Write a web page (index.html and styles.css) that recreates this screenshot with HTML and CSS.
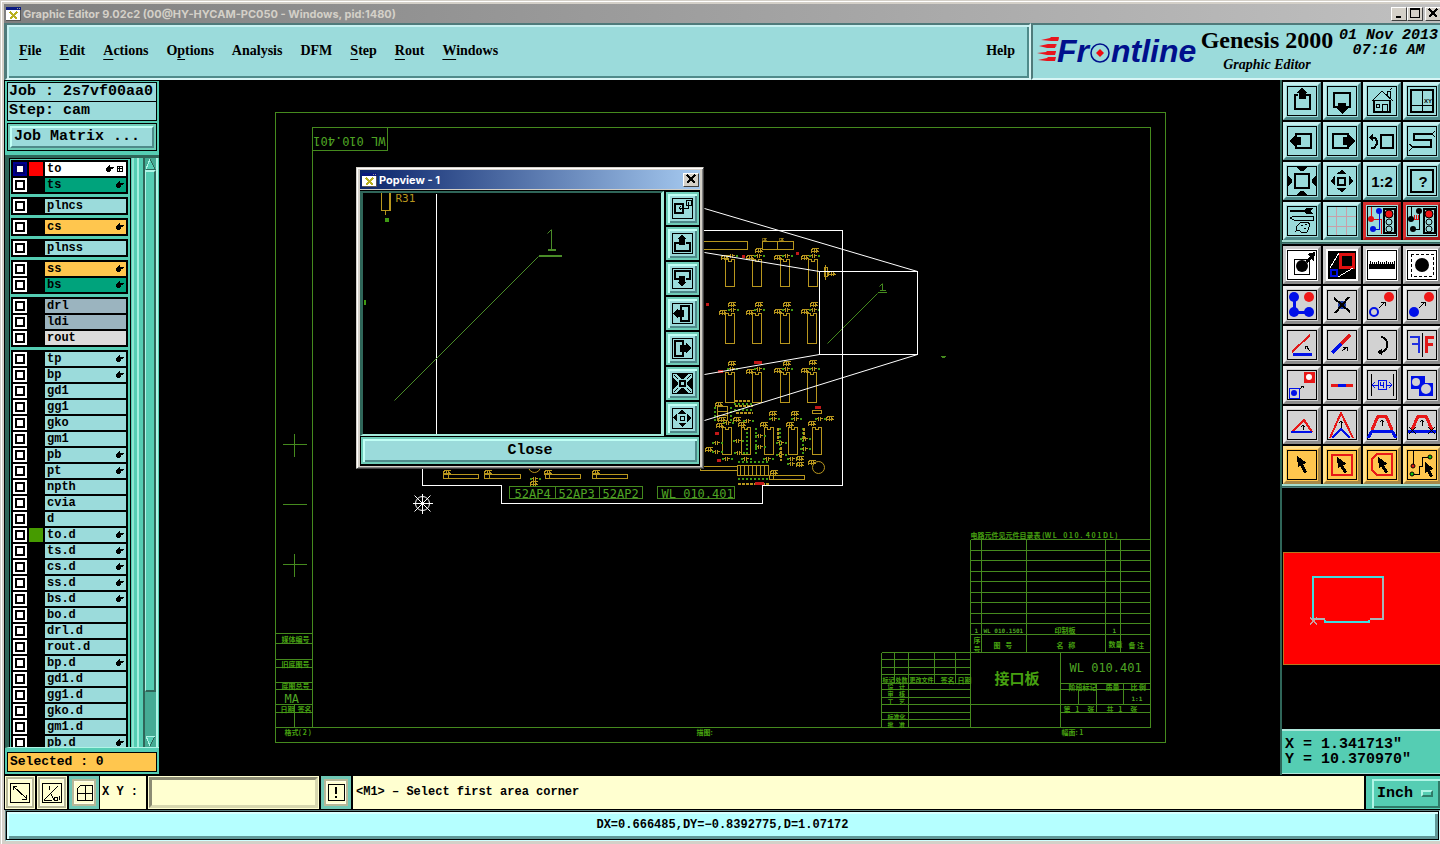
FILE: index.html
```html
<!DOCTYPE html>
<html lang="en">
<head>
<meta charset="utf-8">
<title>Graphic Editor 9.02c2</title>
<link rel="stylesheet" href="styles.css">
</head>
<body>
<svg class="defs" aria-hidden="true">
  <symbol id="app" viewBox="0 0 15 14"><path fill="#fff" d="M0 0h15v14H0z"/><path fill="#0a1a80" d="M0 0h15v3H0z"/><path fill="#999" d="M11 1h1v1h-1zM13 1h1v1h-1z"/><path stroke="#b8b020" stroke-width="2" fill="none" d="M4 5l7 7M11 5l-7 7"/><path stroke="#555" fill="none" d="M14.500 3v10.500H0"/></symbol>
  <symbol id="hand" viewBox="0 0 8 8"><path d="M3 0h1v2h4v1H7v1H5v2H4v1H1V6H0V3h1V2h1V1h1z"/></symbol>
  <symbol id="chip" viewBox="0 0 10 31" overflow="visible"><path d="M0 0h3v2h3V0h3v30H0z" fill="none" stroke="#b8961e"/></symbol>
  <symbol id="chips" viewBox="0 0 10 27" overflow="visible"><path d="M0 0h3v2h3V0h3v27H0z" fill="none" stroke="#b8961e"/></symbol>
  <symbol id="cap" viewBox="0 0 10 5" overflow="visible"><path d="M2 2h2M6 2h2" stroke="#b8961e"/><path d="M4 0v4M6 0v4" stroke="#b8961e"/><path d="M0 2h2M9 2h2" stroke="#3f9a14" stroke-width="2"/></symbol>
  <symbol id="lbl" viewBox="0 0 7 4" overflow="visible"><path d="M0 0h7M0 1h1M0 3h7M0 0v4M3 0v4M5 0v4M6 1v2" stroke="#b8961e" fill="none"/></symbol>
</svg>
<div class="window">
  <header class="titlebar">
    <svg class="app-icon"><use href="#app"/></svg>
    <h1>Graphic Editor 9.02c2 (00@HY-HYCAM-PC050 - Windows, pid:1480)</h1>
    <div class="controls">
      <button aria-label="Minimize"><svg viewBox="0 0 12 11"><path d="M3 8h5v2H3z"/></svg></button>
      <button aria-label="Maximize"><svg viewBox="0 0 12 11"><path d="M1 0h10v10H1zM2 2v7h8V2z" fill-rule="evenodd"/></svg></button>
      <button class="gap" aria-label="Close window"><svg viewBox="0 0 12 11"><path d="M2 1l8 8M10 1L2 9" stroke="#000" stroke-width="2"/></svg></button>
    </div>
  </header>
  <div class="header">
    <nav class="menubar">
      <button><u>F</u>ile</button><button><u>E</u>dit</button><button><u>A</u>ctions</button><button>O<u>p</u>tions</button><button>Analysis</button><button>DFM</button><button><u>S</u>tep</button><button><u>R</u>out</button><button><u>W</u>indows</button>
      <button class="help">Help</button>
    </nav>
    <div class="brand">
      <svg class="logo" viewBox="0 -8 160 46" role="img" aria-label="Frontline">
        <g fill="#e8141c"><path d="M4 4l9-2 1-1h8l-1 4h-7zM2 10l9-2h8l-1 4h-8zM0 17l9-1 1-1h9l-1 4h-8zM1 24l9-2 1-1h8l-1 4h-8z"/><path d="M15 2h7l-1 3h-7zM13 8h7l-1 3h-7zM12 15h7l-1 3h-7z" opacity=".6"/></g>
        <g class="logo-text"><text x="20" y="26">Fr</text><text x="74" y="26">ntline</text></g>
        <circle cx="63" cy="17" r="9" fill="#9bdbdb" stroke="#00108c" stroke-width="1.500"/><path d="M63 13l4 4-4 4-4-4z" fill="#f00c10"/>
      </svg>
      <div class="product"><strong>Genesis 2000</strong><em>Graphic Editor</em></div>
      <time class="clock">01 Nov 2013<br>07:16 AM</time>
    </div>
  </div>

  <main class="main">
    <aside class="sidebar">
      <div class="job">Job : 2s7vf00aa0</div>
      <div class="job">Step: cam</div>
      <div class="matrix"><button>Job Matrix ...</button></div>
      <div class="layers">
        <div class="list">
          <div class="group">
            <label class="layer white"><input type="checkbox" checked><i class="red"></i><span>to<svg><use href="#hand"/></svg><svg viewBox="0 0 7 7"><path d="M1 1h5v5H1zM3 1v5M1 3h5" fill="none" stroke="#000"/></svg></span></label>
            <label class="layer green"><input type="checkbox"><i></i><span>ts<svg><use href="#hand"/></svg></span></label>
          </div>
          <div class="group"><label class="layer"><input type="checkbox"><i></i><span>plncs</span></label></div>
          <div class="group"><label class="layer orange"><input type="checkbox"><i></i><span>cs<svg><use href="#hand"/></svg></span></label></div>
          <div class="group"><label class="layer"><input type="checkbox"><i></i><span>plnss</span></label></div>
          <div class="group">
            <label class="layer orange"><input type="checkbox"><i></i><span>ss<svg><use href="#hand"/></svg></span></label>
            <label class="layer green"><input type="checkbox"><i></i><span>bs<svg><use href="#hand"/></svg></span></label>
          </div>
          <div class="group">
            <label class="layer slate"><input type="checkbox"><i></i><span>drl</span></label>
            <label class="layer slate"><input type="checkbox"><i></i><span>ldi</span></label>
            <label class="layer silver"><input type="checkbox"><i></i><span>rout</span></label>
          </div>
          <div class="group">
            <label class="layer"><input type="checkbox"><i></i><span>tp<svg><use href="#hand"/></svg></span></label>
            <label class="layer"><input type="checkbox"><i></i><span>bp<svg><use href="#hand"/></svg></span></label>
            <label class="layer"><input type="checkbox"><i></i><span>gd1</span></label>
            <label class="layer"><input type="checkbox"><i></i><span>gg1</span></label>
            <label class="layer"><input type="checkbox"><i></i><span>gko</span></label>
            <label class="layer"><input type="checkbox"><i></i><span>gm1</span></label>
            <label class="layer"><input type="checkbox"><i></i><span>pb<svg><use href="#hand"/></svg></span></label>
            <label class="layer"><input type="checkbox"><i></i><span>pt<svg><use href="#hand"/></svg></span></label>
            <label class="layer"><input type="checkbox"><i></i><span>npth</span></label>
            <label class="layer"><input type="checkbox"><i></i><span>cvia</span></label>
            <label class="layer"><input type="checkbox"><i></i><span>d</span></label>
            <label class="layer"><input type="checkbox"><i class="olive"></i><span>to.d<svg><use href="#hand"/></svg></span></label>
            <label class="layer"><input type="checkbox"><i></i><span>ts.d<svg><use href="#hand"/></svg></span></label>
            <label class="layer"><input type="checkbox"><i></i><span>cs.d<svg><use href="#hand"/></svg></span></label>
            <label class="layer"><input type="checkbox"><i></i><span>ss.d<svg><use href="#hand"/></svg></span></label>
            <label class="layer"><input type="checkbox"><i></i><span>bs.d<svg><use href="#hand"/></svg></span></label>
            <label class="layer"><input type="checkbox"><i></i><span>bo.d</span></label>
            <label class="layer"><input type="checkbox"><i></i><span>drl.d</span></label>
            <label class="layer"><input type="checkbox"><i></i><span>rout.d</span></label>
            <label class="layer"><input type="checkbox"><i></i><span>bp.d<svg><use href="#hand"/></svg></span></label>
            <label class="layer"><input type="checkbox"><i></i><span>gd1.d</span></label>
            <label class="layer"><input type="checkbox"><i></i><span>gg1.d</span></label>
            <label class="layer"><input type="checkbox"><i></i><span>gko.d</span></label>
            <label class="layer"><input type="checkbox"><i></i><span>gm1.d</span></label>
            <label class="layer"><input type="checkbox"><i></i><span>pb.d<svg><use href="#hand"/></svg></span></label>
          </div>
        </div>
        <div class="rail"></div>
        <div class="scrollbar">
          <svg viewBox="0 0 11 12"><path d="M5 1l5 10H1z" fill="#55cdb3"/><path d="M5 1L1 11" stroke="#b0f5e6"/><path d="M5 1l5 10H1" stroke="#2f6659" fill="none"/></svg>
          <div class="thumb"></div><div class="trough"></div>
          <svg viewBox="0 0 11 12"><path d="M1 1h9L5 11z" fill="#55cdb3"/><path d="M10 1L5 11" stroke="#2f6659"/><path d="M10 1H1l4 10" stroke="#b0f5e6" fill="none"/></svg>
        </div>
      </div>
      <div class="selected">Selected : 0</div>
    </aside>

    <section class="viewer">
      <svg class="drawing" viewBox="158.500 79.500 1121 695">
        <g class="sheet">
          <path d="M275 112H1165V742H275zM312 127H1150V727H312zM312 150H387V127"/>
          <path d="M282 444H306M294 433V456M282 504H306M282 564H306M294 553V576"/>
          <path d="M275 633H312M275 643H312M275 659H312M275 667H312M275 682H312M275 689H312M275 704H312M275 712H312M275 727H312M294 704V727"/>
          <path d="M970 539H1150M970 550H1150M970 560H1150M970 571H1150M970 581H1150M970 592H1150M970 602H1150M970 613H1150M970 623H1150M970 634H1150M881 652H1150"/>
          <path d="M970 539V727M981 539V652M1026 539V652M1105 539V652M1120 539V652"/>
          <path d="M881 652V727M894 652V683M908 652V727M934 652V683M955 652V683M881 659H970M881 667H970M881 674H970M881 683H970M881 689H970M881 697H970M881 704H1150M881 712H970M881 719H970"/>
          <path d="M1060 652V727M1060 683H1150M1060 689H1150M1060 712H1150M1078 689V704M1096 683V712M1123 683V704"/>
          <path d="M509 486H642V498H509zM555 486V498M599 486V498M657 486H734V498H657z"/>
          <path class="smooth" d="M827 343L877 293M879 286l3-3"/><path d="M877 292H886M882 283V290M879 290H885M940 356H945M941 357H944"/>
        </g>
        <g class="cad">
          <text transform="rotate(180 350 140)" x="315" y="144">WL 010.401</text>
          <text x="1069" y="671">WL 010.401</text>
          <text x="661" y="497">WL 010.401</text>
          <text x="514" y="497">52AP4</text><text x="558" y="497">52AP3</text><text x="602" y="497">52AP2</text>
          <text x="284" y="702">MA</text>
        </g>
        <g class="cad tiny">
          <text x="974" y="632">1</text><text x="983" y="632">WL 010.1501</text><text x="1112" y="632">1</text><text x="1131" y="700">1:1</text>
        </g>
        <g class="cjk">
          <text x="970" y="537">电路元件见元件目录表 (W L &#160; &#160;0 1 0 . &#160;4 0 1 D L )</text>
          <text x="1054" y="632">印制板</text>
          <text x="973" y="642">序</text><text x="973" y="651">号</text>
          <text x="993" y="647">图 &#160; 号</text><text x="1056" y="647">名 &#160; 称</text><text x="1108" y="646">数量</text><text x="1128" y="647">备 注</text>
          <text x="940" y="682">签名</text><text x="957" y="682">日期</text>
          <text x="1068" y="689">阶段标记</text><text x="1105" y="689">质量</text><text x="1130" y="689">比 例</text>
          <text x="1063" y="711">第 &#160; 1 &#160; &#160; 张</text><text x="1106" y="711">共 &#160; 1 &#160; &#160; 张</text>
          <text x="1061" y="734">幅面: 1</text><text x="696" y="734">描图:</text><text x="284" y="734">格式( 2 )</text>
          <text x="281" y="641">媒体编号</text><text x="281" y="666">旧底图号</text><text x="281" y="688">底图总号</text><text x="280" y="711">日期</text><text x="297" y="711">签名</text>
        </g>
        <g class="cjk small">
          <text x="882" y="681">标记</text><text x="895" y="681">处数</text><text x="909" y="681">更改文件</text>
          <text x="887" y="688">设 &#160; &#160;计</text><text x="887" y="695">审 &#160; &#160;核</text><text x="887" y="703">工 &#160; &#160;艺</text><text x="887" y="718">标准化</text><text x="887" y="726">批 &#160; &#160;准</text>
        </g>
        <text class="board-name" x="994" y="683">接口板</text>
        <g class="parts">
          <path d="M700 241H747V249H700zM762 241H793V249H762zM777 241V249M700 466H737V470H700zM769 475H804V479H769zM443 474H478V478H443zM484 474H520V478H484zM545 474H580V478H545zM592 474H627V478H592z"/>
          <path d="M448 474V478M489 474V478M549 474V478M596 474V478M773 475V479M737 465H768V475H737zM740 465V475M744 465V475M748 465V475M752 465V475M756 465V475M760 465V475M764 465V475M812 410H821V413H812zM824 267H827V276H824zM825 264V279M717 406H727V420H717zM717 411H727M717 415H727"/>
          <circle cx="818" cy="467" r="6"/><circle cx="534" cy="466" r="6"/>
          <path class="pads" stroke="#3f9a14" stroke-width="2" stroke-dasharray="2 2" d="M737 461H768M737 478H768M733 409H752M733 403H752M714 406V420M730 406V420M746 427V455M755 427V455M779 427V455M802 427V455"/>
          <path stroke-width="2" stroke-dasharray="3 1" d="M737 483H768M734 400H750M734 405H752M735 412H752M777 427V440M780 446V460M803 427V438"/>
          <path stroke="#c21818" stroke-width="3" d="M754 483H763M705 304H708M753 362H761M717 371H722M714 433H718M795 253H798M741 256H744M814 407H820M716 460H720"/>
        </g>
        <g class="parts">
          <use href="#chips" x="725" y="259" width="10" height="27"/><use href="#chips" x="752" y="259" width="10" height="27"/><use href="#chips" x="780" y="259" width="10" height="27"/><use href="#chips" x="808" y="259" width="10" height="27"/>
          <use href="#chip" x="725" y="313" width="10" height="31"/><use href="#chip" x="752" y="313" width="10" height="31"/><use href="#chip" x="780" y="313" width="10" height="31"/><use href="#chip" x="807" y="313" width="10" height="31"/>
          <use href="#chip" x="725" y="372" width="10" height="31"/><use href="#chip" x="752" y="372" width="10" height="31"/><use href="#chip" x="780" y="372" width="10" height="31"/><use href="#chip" x="807" y="372" width="10" height="31"/>
          <use href="#chips" x="722" y="427" width="10" height="27"/><use href="#chips" x="741" y="427" width="10" height="27"/><use href="#chips" x="764" y="427" width="10" height="27"/><use href="#chips" x="788" y="427" width="10" height="27"/><use href="#chips" x="812" y="427" width="10" height="27"/>
          <use href="#cap" x="726" y="253" width="10" height="5"/><use href="#cap" x="753" y="253" width="10" height="5"/><use href="#cap" x="781" y="253" width="10" height="5"/><use href="#cap" x="808" y="253" width="10" height="5"/>
          <use href="#cap" x="727" y="307" width="10" height="5"/><use href="#cap" x="753" y="307" width="10" height="5"/><use href="#cap" x="781" y="307" width="10" height="5"/><use href="#cap" x="808" y="307" width="10" height="5"/>
          <use href="#cap" x="726" y="366" width="10" height="5"/><use href="#cap" x="753" y="366" width="10" height="5"/><use href="#cap" x="781" y="366" width="10" height="5"/><use href="#cap" x="808" y="366" width="10" height="5"/>
          <use href="#cap" x="768" y="416" width="10" height="5"/><use href="#cap" x="790" y="416" width="10" height="5"/><use href="#cap" x="814" y="416" width="10" height="5"/><use href="#cap" x="742" y="418" width="10" height="5"/><use href="#cap" x="722" y="420" width="10" height="5"/>
          <use href="#cap" x="711" y="440" width="10" height="5"/><use href="#cap" x="711" y="449" width="10" height="5"/><use href="#cap" x="732" y="438" width="10" height="5"/><use href="#cap" x="733" y="450" width="10" height="5"/><use href="#cap" x="754" y="433" width="10" height="5"/><use href="#cap" x="754" y="444" width="10" height="5"/><use href="#cap" x="775" y="440" width="10" height="5"/><use href="#cap" x="775" y="452" width="10" height="5"/><use href="#cap" x="799" y="436" width="10" height="5"/><use href="#cap" x="799" y="446" width="10" height="5"/><use href="#cap" x="721" y="456" width="10" height="5"/><use href="#cap" x="740" y="456" width="10" height="5"/><use href="#cap" x="762" y="456" width="10" height="5"/><use href="#cap" x="786" y="456" width="10" height="5"/><use href="#cap" x="786" y="461" width="10" height="5"/>
          <use href="#lbl" x="762" y="237" width="4" height="4"/><use href="#lbl" x="779" y="237" width="4" height="4"/>
          <use href="#lbl" x="721" y="255" width="7" height="4"/><use href="#lbl" x="746" y="255" width="7" height="4"/><use href="#lbl" x="774" y="255" width="7" height="4"/><use href="#lbl" x="801" y="255" width="7" height="4"/><use href="#lbl" x="755" y="248" width="7" height="4"/><use href="#lbl" x="811" y="248" width="7" height="4"/><use href="#lbl" x="828" y="271" width="7" height="4"/>
          <use href="#lbl" x="719" y="310" width="7" height="4"/><use href="#lbl" x="746" y="310" width="7" height="4"/><use href="#lbl" x="774" y="309" width="7" height="4"/><use href="#lbl" x="801" y="309" width="7" height="4"/><use href="#lbl" x="728" y="302" width="7" height="4"/><use href="#lbl" x="755" y="302" width="7" height="4"/><use href="#lbl" x="783" y="302" width="7" height="4"/><use href="#lbl" x="810" y="302" width="7" height="4"/>
          <use href="#lbl" x="746" y="369" width="7" height="4"/><use href="#lbl" x="774" y="368" width="7" height="4"/><use href="#lbl" x="801" y="368" width="7" height="4"/><use href="#lbl" x="728" y="361" width="7" height="4"/><use href="#lbl" x="783" y="361" width="7" height="4"/><use href="#lbl" x="809" y="360" width="7" height="4"/>
          <use href="#lbl" x="715" y="402" width="7" height="4"/><use href="#lbl" x="769" y="411" width="7" height="4"/><use href="#lbl" x="791" y="411" width="7" height="4"/><use href="#lbl" x="826" y="416" width="7" height="4"/><use href="#lbl" x="733" y="417" width="7" height="4"/><use href="#lbl" x="718" y="417" width="7" height="4"/>
          <use href="#lbl" x="716" y="423" width="7" height="4"/><use href="#lbl" x="738" y="422" width="7" height="4"/><use href="#lbl" x="760" y="422" width="7" height="4"/><use href="#lbl" x="786" y="422" width="7" height="4"/><use href="#lbl" x="808" y="421" width="7" height="4"/><use href="#lbl" x="796" y="456" width="7" height="4"/><use href="#lbl" x="796" y="462" width="7" height="4"/><use href="#lbl" x="808" y="460" width="7" height="4"/><use href="#lbl" x="770" y="470" width="7" height="4"/><use href="#lbl" x="705" y="447" width="7" height="4"/>
          <use href="#lbl" x="443" y="470" width="7" height="4"/><use href="#lbl" x="484" y="470" width="7" height="4"/><use href="#lbl" x="544" y="470" width="7" height="4"/><use href="#lbl" x="592" y="470" width="7" height="4"/><use href="#lbl" x="530" y="481" width="7" height="4"/><use href="#cap" x="529" y="476" width="10" height="5"/>
        </g>
        <g class="outline">
          <path d="M422 460V485H501V503H762V485H842V230H700M819 271H917V354H819z"/>
          <path class="smooth" d="M704 208L917 271M704 252L819 271M704 374L819 354M704 420L917 354"/>
          <path d="M412 503H432M422 493V513"/><path class="smooth" d="M414 495l16 16M430 495l-16 16"/><circle class="smooth" cx="422" cy="503" r="7"/>
        </g>
      </svg>

      <div class="popview" role="dialog" aria-label="Popview - 1">
        <div class="pop-title"><svg class="app-icon"><use href="#app"/></svg><h2>Popview - 1</h2><button aria-label="Close popview"><svg viewBox="0 0 12 11"><path d="M2 1l8 8M10 1L2 9" stroke="#000" stroke-width="2"/></svg></button></div>
        <div class="pop-body">
          <div class="pop-view">
            <svg viewBox="362.500 192.500 298 241">
              <path d="M436 193V433" stroke="#fff"/>
              <g stroke="#b8961e" fill="none"><path d="M381 190V210H390V190M389 190V210M385 210V214"/></g>
              <text x="395" y="201">R31</text>
              <path d="M384 217h4v4h-4zM363 299h2v5h-2z" fill="#3f9a14"/>
              <g stroke="#4a8c28" fill="none"><path d="M551 229V250M547 250H555M538 256H561" stroke-width="1"/><path d="M547 249H555M538 255H561"/><path class="smooth" d="M394 400L538 256M547 233l4-4"/></g>
            </svg>
          </div>
          <div class="pop-tools">
            <button aria-label="Pan view"><svg viewBox="0 0 21 21"><path class="f" d="M0 0h20v20H0z"/><path class="s" stroke-width="2" d="M3 6h8v9H3z"/><path class="s" d="M14 2h5v5h-5zM16 4v6h-9M9 8l-2 2 2 2"/></svg></button>
            <button aria-label="Pan up"><svg viewBox="0 0 21 21"><path class="f" d="M0 0h20v20H0z"/><path class="s" stroke-width="2" d="M7 10H3v8h15v-8h-4"/><path d="M10 2l5 4h-2v6H7V6H5z"/></svg></button>
            <button aria-label="Pan down"><svg viewBox="0 0 21 21"><path class="f" d="M0 0h20v20H0z"/><path class="s" stroke-width="2" d="M7 11H3V3h15v8h-4"/><path d="M10 18l5-4h-2V8H7v6H5z"/></svg></button>
            <button aria-label="Pan left"><svg viewBox="0 0 21 21"><path class="f" d="M0 0h20v20H0z"/><path class="s" stroke-width="2" d="M9 7V3h8v15H9v-4"/><path d="M1 10l5-5v2h6v7H6v2z"/></svg></button>
            <button aria-label="Pan right"><svg viewBox="0 0 21 21"><path class="f" d="M0 0h20v20H0z"/><path class="s" stroke-width="2" d="M11 7V3H3v15h8v-4"/><path d="M19 10l-5-5v2H8v7h6v2z"/></svg></button>
            <button aria-label="Zoom in"><svg viewBox="0 0 21 21"><path class="f" d="M0 0h20v20H0z"/><path class="s" stroke-width="2" d="M8 8h5v5H8z"/><path class="s" d="M2 2l4 4M19 2l-4 4M2 19l4-4M19 19l-4-4"/><path d="M5 1h11l-4 5H9zM5 20h11l-4-5H9zM1 5v11l5-4V9zM20 5v11l-5-4V9z"/></svg></button>
            <button aria-label="Zoom out"><svg viewBox="0 0 21 21"><path class="f" d="M0 0h20v20H0z"/><path class="s" d="M8 8h4v4H8z"/><path d="M10 1l4 5H6zM10 19l4-4H6zM1 10l4-5v9zM19 10l-4-5v9z"/></svg></button>
          </div>
        </div>
        <div class="pop-close"><button>Close</button></div>
      </div>
    </section>

    <aside class="tools">
      <div class="grid">
        <button aria-label="Pan up"><svg viewBox="0 0 30 30"><path class="f" d="M0 0h29v29H0z"/><path class="s" stroke-width="2" d="M11 9H8v14h15V9h-4"/><path d="M15 2l6 5h-2v6h-7V7H9z"/></svg></button>
        <button aria-label="Pan down"><svg viewBox="0 0 30 30"><path class="f" d="M0 0h29v29H0z"/><path class="s" stroke-width="2" d="M11 21H7V7h16v14h-4"/><path d="M15 28l6-6h-2v-5h-8v5H9z"/></svg></button>
        <button aria-label="Home"><svg viewBox="0 0 30 30"><path class="f" d="M0 0h29v29H0z"/><path class="s" stroke-width="2" d="M7 14v12h16V14"/><path class="s" d="M5 15L15 5l11 10M7 14h16M20 9V5h3v7M23 4l2-2M9 18h3v3H9zM15 26v-8h5v8"/></svg></button>
        <button aria-label="Coordinates"><svg viewBox="0 0 30 30"><path class="f" d="M0 0h29v29H0z"/><path class="s" stroke-width="2" d="M4 4h22v22H4z"/><path class="s" d="M15 4v22M4 19h22"/><text class="xy" x="17" y="17">XY</text></svg></button>
        <button aria-label="Pan left"><svg viewBox="0 0 30 30"><path class="f" d="M0 0h29v29H0z"/><path class="s" stroke-width="2" d="M9 11V8h15v14H9v-3"/><path d="M2 15l6-6v2h6v8H8v2z"/></svg></button>
        <button aria-label="Pan right"><svg viewBox="0 0 30 30"><path class="f" d="M0 0h29v29H0z"/><path class="s" stroke-width="2" d="M21 11V8H6v14h15v-3"/><path d="M28 15l-6-6v2h-6v8h6v2z"/></svg></button>
        <button aria-label="Previous view"><svg viewBox="0 0 30 30"><path class="f" d="M0 0h29v29H0z"/><path class="s" stroke-width="2" d="M14 9h12v13H14zM5 12h3l2 3v3l-3 4H4"/><path d="M2 12l4-5v9z"/></svg></button>
        <button aria-label="Serpentine"><svg viewBox="0 0 30 30"><path class="f" d="M0 0h29v29H0z"/><path class="s" stroke-width="2" d="M25 8H7v6h17v7H6"/><path class="s" d="M25 8l3-3M25 8l3 3M6 21l-4-3M6 21l-4 4"/></svg></button>
        <button aria-label="Fit"><svg viewBox="0 0 30 30"><path class="f" d="M0 0h29v29H0z"/><path class="s" stroke-width="2" d="M8 8h14v14H8z"/><path d="M9 1h12l-5 4h-2zM9 29h12l-5-4h-2zM1 9v12l4-5v-2zM29 9v12l-4-5v-2z"/></svg></button>
        <button aria-label="Zoom out"><svg viewBox="0 0 30 30"><path class="f" d="M0 0h29v29H0z"/><path class="s" stroke-width="2" d="M11 12h7v7h-7z"/><path d="M15 4l5 4H9zM15 26l5-4H9zM4 15l4-6v11zM26 15l-4-6v11z"/></svg></button>
        <button aria-label="Scale one to two"><svg viewBox="0 0 30 30"><path class="f" d="M0 0h29v29H0z"/><text class="ratio" x="15" y="21">1:2</text></svg></button>
        <button aria-label="Query"><svg viewBox="0 0 30 30"><path class="f" d="M0 0h29v29H0z"/><path class="s" stroke-width="2" d="M4 4h22v22H4z"/><text class="ratio" x="16" y="21">?</text></svg></button>
        <button aria-label="Settings"><svg viewBox="0 0 30 30"><path class="f" d="M0 0h29v29H0z"/><path d="M3 4h14l3-2h6l-3 3 3 3h-6l-3-2H3z"/><path class="s" d="M3 12l4-2h19v4H7zM10 20l4-4h7l2 3-3 7h-6l-2-2-3 1z"/><path d="M14 19h2v1h-2zM18 18h2v1h-2zM17 22h2v1h-2z"/></svg></button>
        <button aria-label="Grid"><svg viewBox="0 0 30 30"><path class="f" d="M0 0h29v29H0z"/><path d="M9 1v28M19 1v28M1 10h28M1 20h28" stroke="#c9a0a8"/></svg></button>
        <button class="hot" aria-label="Online check"><svg viewBox="0 0 30 30"><path class="f" d="M0 0h29v29H0z"/><path d="M4 1v12h10v15" stroke="#e01010" fill="none"/><path d="M12 5v18H6" stroke="#0010e0" fill="none"/><circle cx="4" cy="13" r="3" fill="#e01010"/><circle cx="12" cy="5" r="3" fill="#0010e0"/><circle cx="6" cy="23" r="3" fill="#0010e0"/><path class="s" stroke-width="2" d="M17 3h11v24H17z"/><circle cx="22" cy="8" r="4" fill="#f01010" stroke="#000"/><circle class="s" cx="22" cy="16" r="3"/><circle class="s" cx="22" cy="23" r="3"/></svg></button>
        <button class="hot" aria-label="Spacing check"><svg viewBox="0 0 30 30"><path class="f" d="M0 0h29v29H0z"/><path class="s" d="M4 1v12M12 5v18H6"/><path d="M5 13h7M7 9v4M9 9v4M11 9v4" stroke="#e01010" fill="none"/><circle cx="4" cy="13" r="3"/><circle cx="12" cy="5" r="3"/><circle cx="6" cy="23" r="3"/><path class="s" stroke-width="2" d="M17 3h11v24H17z"/><circle cx="22" cy="8" r="4" fill="#f01010" stroke="#000"/><circle class="s" cx="22" cy="16" r="3"/><circle class="s" cx="22" cy="23" r="3"/></svg></button>
      </div>
      <div class="divider"></div>
      <div class="grid gray">
        <button class="paper" aria-label="Select feature"><svg viewBox="0 0 30 30"><path class="f" d="M0 0h29v29H0z"/><path class="s" d="M7 9h15v15H7z"/><circle cx="15" cy="16" r="6"/><path d="M18 11l5-5-3-2 8-2-1 9-3-2-4 4z"/></svg></button>
        <button class="paper" aria-label="Popview"><svg viewBox="0 0 30 30"><path d="M1 1h28v28H1z"/><path d="M13 4h13v13H13z" stroke="#e01010" stroke-width="3"/><path d="M4 20h6v6H4z" stroke="#0010e0" stroke-width="2"/><path d="M3 18L12 3M11 27l15-9" stroke="#fff"/></svg></button>
        <button class="paper" aria-label="Measure"><svg viewBox="0 0 30 30"><path class="f" d="M0 0h29v29H0z"/><path d="M2 14h26v5H2z"/><path d="M3 11v4M5 12v2M7 12v2M9 12v2M11 11v4M13 12v2M15 12v2M17 12v2M19 11v4M21 12v2M23 12v2M25 12v2M27 11v4" stroke="#000"/></svg></button>
        <button class="paper" aria-label="Highlight"><svg viewBox="0 0 30 30"><path class="f" d="M0 0h29v29H0z"/><path class="s" stroke-dasharray="3 2" d="M4 4h22v22H4z"/><circle cx="15" cy="15" r="7"/></svg></button>

        <button aria-label="Line chain"><svg viewBox="0 0 30 30"><path class="f" d="M0 0h29v29H0z"/><path d="M7 7v15h15" stroke="#0010e8" stroke-width="3" fill="none"/><g fill="#0010e8"><circle cx="7" cy="7" r="5"/><circle cx="7" cy="22" r="5"/><circle cx="22" cy="22" r="5"/></g><circle cx="22" cy="7" r="5" fill="#f01818"/></svg></button>
        <button aria-label="Delete"><svg viewBox="0 0 30 30"><path class="f" d="M0 0h29v29H0z"/><circle cx="15" cy="15" r="4" fill="#1030a0"/><path class="s" stroke-width="2" d="M7 8l16 14M22 7L8 23"/></svg></button>
        <button aria-label="Move"><svg viewBox="0 0 30 30"><path class="f" d="M0 0h29v29H0z"/><circle cx="22" cy="7" r="5" fill="#f01818"/><circle cx="7" cy="22" r="4" fill="none" stroke="#0010e8" stroke-width="2"/><path class="s" d="M12 18l5-5M14 12h4v4"/></svg></button>
        <button aria-label="Copy"><svg viewBox="0 0 30 30"><path class="f" d="M0 0h29v29H0z"/><circle cx="22" cy="7" r="5" fill="#f01818"/><circle cx="7" cy="22" r="5" fill="#0010e8"/><path class="s" d="M12 18l5-5M14 12h4v4"/></svg></button>

        <button aria-label="Rotate line"><svg viewBox="0 0 30 30"><path class="f" d="M0 0h29v29H0z"/><path d="M6 24h19" stroke="#0010e8" stroke-width="3"/><path d="M5 22L23 5" stroke="#e01818" stroke-width="2"/><path class="s" d="M19 16l4 5M18 19v-3h3"/></svg></button>
        <button aria-label="Extend line"><svg viewBox="0 0 30 30"><path class="f" d="M0 0h29v29H0z"/><path d="M5 23l9-9" stroke="#0010e8" stroke-width="3"/><path d="M14 14l9-9" stroke="#e01818" stroke-width="3"/><path class="s" d="M15 21l5-4M16 17h4v4"/></svg></button>
        <button aria-label="Rotate"><svg viewBox="0 0 30 30"><path class="f" d="M0 0h29v29H0z"/><path class="s" stroke-width="2" d="M14 7c7 1 9 12 1 15h-4"/><path d="M10 22l5-3v6z"/></svg></button>
        <button aria-label="Mirror"><svg viewBox="0 0 30 30"><path class="f" d="M0 0h29v29H0z"/><path class="s" d="M15 3v24"/><path d="M12 23V7H3M12 14H5" stroke="#2030e0" stroke-width="2" fill="none"/><path d="M19 23V7h8M19 14h7" stroke="#e01818" stroke-width="3" fill="none"/></svg></button>

        <button aria-label="Change symbol"><svg viewBox="0 0 30 30"><path class="f" d="M0 0h29v29H0z"/><path d="M17 2h11v11H17z" fill="#e81818"/><circle cx="22" cy="7" r="3" fill="#fff"/><path d="M2 18h10v10H2z" fill="none" stroke="#0010e8"/><circle cx="7" cy="23" r="3" fill="#0010e8"/><path class="s" d="M13 19l3-3M14 16h2v2"/></svg></button>
        <button aria-label="Break line"><svg viewBox="0 0 30 30"><path class="f" d="M0 0h29v29H0z"/><path d="M4 15h22" stroke="#e81818" stroke-width="3"/><path d="M11 15h8" stroke="#0010e8" stroke-width="3"/></svg></button>
        <button aria-label="Spacing"><svg viewBox="0 0 30 30"><path class="f" d="M0 0h29v29H0z"/><path class="s" d="M4 4v22M26 4v22"/><path d="M11 10h8v9h-8zM6 15h5M19 15h6M8 12l-3 3 3 3M22 12l3 3-3 3M13 12v3h4M16 12v6" stroke="#0010e8" fill="none"/></svg></button>
        <button aria-label="Merge surfaces"><svg viewBox="0 0 30 30"><path class="f" d="M0 0h29v29H0z"/><path d="M4 6h14v7h8v13H12v-7H4z" fill="#0010e8"/><circle cx="9" cy="12" r="4" fill="#d2d2d2"/><circle cx="19" cy="19" r="5" fill="#d2d2d2"/></svg></button>

        <button aria-label="Slope"><svg viewBox="0 0 30 30"><path class="f" d="M0 0h29v29H0z"/><path d="M5 22L17 10l8 12" stroke="#e81818" stroke-width="2" fill="none"/><path d="M4 22h21" stroke="#0010e8" stroke-width="2"/><path class="s" d="M16 20v-5M14 17l2-2 2 2"/></svg></button>
        <button aria-label="Peak"><svg viewBox="0 0 30 30"><path class="f" d="M0 0h29v29H0z"/><path d="M3 28L14 3l12 25" stroke="#e81818" stroke-width="2" fill="none"/><path d="M5 28l9-9 9 9" stroke="#0010e8" stroke-width="2" fill="none"/><path class="s" d="M14 18v-7M12 13l2-2 2 2"/></svg></button>
        <button aria-label="Plateau"><svg viewBox="0 0 30 30"><path class="f" d="M0 0h29v29H0z"/><path d="M5 20L11 6h8l6 14" stroke="#e81818" stroke-width="3" fill="none"/><path d="M1 28l4-7h20l4 7" stroke="#0010e8" stroke-width="3" fill="none"/><path class="s" d="M15 16v-6M13 12l2-2 2 2"/></svg></button>
        <button aria-label="Cut plateau"><svg viewBox="0 0 30 30"><path class="f" d="M0 0h29v29H0z"/><path d="M5 20L11 6h8l6 14" stroke="#e81818" stroke-width="3" fill="none"/><path d="M1 21h28" stroke="#0010e8" stroke-width="3"/><path class="s" d="M15 16v-6M13 12l2-2 2 2M2 17l7 7M9 17l-7 7M21 17l7 7M28 17l-7 7"/></svg></button>

        <button class="gold" aria-label="Select"><svg viewBox="0 0 30 30"><path class="f" d="M0 0h29v29H0z"/><path d="M10 6l10 7-4 1 4 8-3 1-4-8-2 3z"/></svg></button>
        <button class="gold" aria-label="Select in frame"><svg viewBox="0 0 30 30"><path class="f" d="M0 0h29v29H0z"/><path d="M5 5h20v20H5z" stroke="#e81818" stroke-width="2" fill="none"/><path d="M10 7l10 7-4 1 4 7-3 1-4-7-2 3z"/></svg></button>
        <button class="gold" aria-label="Select in polygon"><svg viewBox="0 0 30 30"><path class="f" d="M0 0h29v29H0z"/><path d="M10 4h15v21H10l-5-5V9z" stroke="#e81818" stroke-width="2" fill="none"/><path d="M11 7l10 7-4 1 4 7-3 1-4-7-2 3z"/></svg></button>
        <button class="gold" aria-label="Select net"><svg viewBox="0 0 30 30"><path class="f" d="M0 0h29v29H0z"/><path class="s" d="M6 1v15M5 24h7v-8h3V7h8"/><circle cx="6" cy="16" r="2" fill="#e01818" stroke="#000"/><circle cx="5" cy="24" r="2" fill="#10c010" stroke="#000"/><circle cx="23" cy="7" r="2" fill="#10c010" stroke="#000"/><path d="M18 12l9 7-4 1 3 6-3 1-3-6-2 2z"/></svg></button>
      </div>
      <div class="divider"></div>
      <svg class="overview" viewBox="0 0 158 240"><path d="M1 64h160v112H1z" fill="red" stroke="#b8781e" stroke-width="1"/><path d="M43 131v2h44v-2M31 130V88h70v42H88" fill="none" stroke="#40dce0" stroke-width="2"/><path d="M101 90v40H88M31 130h12" fill="none" stroke="#a8b4b8" stroke-width="2"/><path d="M28 129l7 7M35 129l-7 7" stroke="#c9a0a0"/></svg>
      <output class="readout">X = 1.341713"<br>Y = 10.370970"</output>
    </aside>
  </main>

  <div class="command">
    <button class="cmd" aria-label="Snap"><svg viewBox="0 0 22 22"><path class="f" d="M1 1h19v19H1z"/><path class="s" d="M4 4l13 12M4 8V4h4M13 17h4v-4"/></svg></button>
    <button class="cmd" aria-label="Angle lock"><svg viewBox="0 0 22 22"><path class="f" d="M1 1h19v19H1z"/><path class="s" d="M3 18L17 4M3 18h8M8 4v4M10 12l3 6M13 15h3v3h-3zM18 14v4"/></svg></button>
    <button class="cmd teal" aria-label="Grid snap"><svg viewBox="0 0 17 17"><path class="s" d="M5 1h11v15H1V5zM1 9h15M9 1v15"/></svg></button>
    <label class="xylabel" for="xy">X Y :</label>
    <input id="xy" type="text">
    <button class="cmd teal" aria-label="Alert"><svg viewBox="0 0 17 17"><path class="f" d="M0 0h16v16H0z"/><path d="M7 3h2v7H7zM7 12h2v2H7z"/></svg></button>
    <div class="prompt">&lt;M1&gt; – Select first area corner</div>
    <label class="units"><select aria-label="Units"><option>Inch</option></select><i></i></label>
  </div>
  <footer class="status">DX=0.666485,DY=−0.8392775,D=1.07172</footer>
</div>
</body>
</html>
```
FILE: styles.css
```css
* { box-sizing: border-box; }
body { margin: 0; background: #d4d0c8; color: #000; overflow: hidden; font-family: "Liberation Mono", monospace; font-weight: bold; }
button, input, select { font: inherit; color: inherit; margin: 0; padding: 0; border-radius: 0; }
svg { display: block; shape-rendering: crispEdges; }
circle { shape-rendering: auto; }
.defs { position: absolute; width: 0; height: 0; }
.f { fill: none; stroke: #000; transform: translate(.5px, .5px); }
.s { fill: none; stroke: #000; }

.window { display: flex; flex-direction: column; height: 100vh; padding: 4px 0 3px 4px; box-shadow: inset 1px 1px #d4d0c8, inset 2px 2px #fff; }

.titlebar { display: flex; align-items: center; height: 19px; flex: none; padding-left: 2px; background: linear-gradient(90deg, #808080, #c0c0c0); }
.app-icon { width: 15px; height: 14px; flex: none; }
.titlebar h1, .pop-title h2 { margin: 0 0 0 2px; flex: 1; font-family: Inter, sans-serif; font-size: 11px; line-height: 14px; color: #d4d0c8; white-space: nowrap; }
.controls { display: flex; margin-right: -1px; }
.controls button, .pop-title button { width: 16px; height: 14px; background: #d4d0c8; border: 1px solid; border-color: #fff #404040 #404040 #fff; }
.controls .gap { margin-left: 2px; }
.controls svg, .pop-title button svg { width: 12px; height: 11px; margin: 0 auto; }

.header { display: flex; flex: none; height: 57px; border-left: 1px solid #4f7a7a; font-family: "Liberation Serif", serif; }
.menubar { flex: 1; display: flex; align-items: center; gap: 18px; padding: 0 14px 2px 12px; background: #9bdbdb; border: 2px solid; border-color: #4f7a7a #d8f5f5 #d8f5f5 #4f7a7a; box-shadow: inset 2px 2px #c8f2f2, inset -2px -2px #4f8a8a; }
.menubar button { border: 0; background: none; font-size: 14px; line-height: 18px; }
.menubar u { text-underline-offset: 4px; text-decoration-thickness: 1px; }
.menubar .help { margin-left: auto; }
.brand { flex: none; width: 409px; display: flex; padding-left: 4px; background: #9bdbdb; border: 2px solid; border-color: #4f7a7a #9bdbdb #d8f5f5 #4f7a7a; border-right: 0; }
.logo { width: 160px; height: 46px; margin-top: 3px; shape-rendering: auto; flex: none; }
.logo path { shape-rendering: auto; }
.logo-text { font: italic bold 32px "Liberation Sans", sans-serif; fill: #00108c; }
.product { display: flex; flex-direction: column; align-items: center; width: 140px; flex: none; }
.product strong { font-size: 24px; line-height: 30px; white-space: nowrap; }
.product em { font-size: 14px; line-height: 20px; }
.clock { flex: 1; text-align: center; font: italic bold 15px/15px "Liberation Mono", monospace; white-space: nowrap; padding-top: 3px; }

.main { display: flex; flex: 1; min-height: 0; padding-left: 1px; background: #000; }
.sidebar { width: 154px; flex: none; display: flex; flex-direction: column; padding: 1px 2px 2px; background: #55cdb3; border-top: 1px solid #000; margin-bottom: 1px; }
.job { height: 20px; margin-bottom: -1px; padding-left: 1px; background: #9bdbdb; border: 1px solid #000; font-size: 15px; line-height: 18px; white-space: nowrap; }
.matrix { margin-top: 3px; padding: 2px; border: 1px solid #000; background: #6fcdb8; }
.matrix button { display: block; width: 100%; height: 22px; padding-left: 2px; text-align: left; font-size: 15px; line-height: 18px; background: #9bdbdb; border: 2px solid; border-color: #c0fff5 #4f8a8a #4f8a8a #c0fff5; }
.layers { flex: 1; min-height: 0; display: flex; overflow: hidden; margin: 4px -2px 4px; border-top: 3px solid #2f6659; border-left: 4px solid #2f6659; border-bottom: 1px solid #b0f5e6; }
.list { width: 122px; flex: none; display: flex; flex-direction: column; gap: 3px; padding: 1px 1px 0 1px; border: 1px solid #000; border-bottom: 0; }
.group { display: grid; gap: 2px; padding: 2px; background: #000; width: 117px; }
.layer { display: flex; gap: 2px; height: 14px; }
.layer input { appearance: none; width: 14px; height: 14px; background: #fff; border: 2px solid #fff; box-shadow: inset 0 0 0 2px #000; }
.layer input:checked { border-color: #000090; box-shadow: inset 0 0 0 2px #000060; }
.layer i { width: 14px; }
.layer .red { background: #f00; }
.layer .olive { background: #469b00; }
.layer span { flex: 1; display: flex; align-items: center; gap: 2px; padding: 0 2px; background: #9bdbdb; font-size: 12px; line-height: 14px; }
.layer span svg { width: 8px; height: 8px; }
.layer svg:first-of-type { margin-left: auto; }
.white span { background: #fff; }
.green span { background: #00a37c; }
.orange span { background: #ffc64e; }
.slate span { background: #9bb4bf; }
.silver span { background: #dcdcdc; }
.rail { width: 11px; flex: none; border-left: 2px solid #8fe6d2; margin-left: 1px; background: linear-gradient(90deg, #55cdb3 3px, #a5f0de 3px, #a5f0de 5px, #55cdb3 5px); }
.scrollbar { flex: 1; display: flex; flex-direction: column; border-left: 2px solid #2f6659; border-right: 2px solid #b0f5e6; margin-right: 2px; background: #45ab94; }
.scrollbar svg { width: 11px; height: 12px; flex: none; }
.thumb { flex: 12; background: #55cdb3; border: 2px solid; border-color: #b0f5e6 #2f6659 #2f6659 #b0f5e6; border-left-width: 1px; }
.trough { flex: 1; }
.selected { height: 20px; flex: none; padding-left: 2px; background: #ffc64e; border: 1px solid #000; font-size: 13px; line-height: 18px; }

.viewer { position: relative; flex: 1; min-width: 0; background: #000; }
.drawing { width: 100%; height: 100%; }
.smooth { shape-rendering: auto; }
.sheet { fill: none; stroke: #458a1e; }
.parts { fill: none; stroke: #b8961e; }
.outline { fill: none; stroke: #fff; }
.cad { font: 12px "DejaVu Sans Mono", monospace; fill: #4fa524; }
.tiny { font-size: 6px; font-weight: bold; }
.cjk { font: bold 7px "Noto Sans CJK SC", sans-serif; fill: #46a010; }
.small { font-size: 6px; }
.board-name { font: bold 15px "Noto Sans CJK SC", sans-serif; fill: #46a010; }

.popview { position: absolute; left: 197px; top: 87px; width: 348px; padding: 2px 3px; background: #d4d0c8; border: 1px solid; border-color: #d4d0c8 #404040 #404040 #d4d0c8; box-shadow: inset 1px 1px #fff, inset -1px -1px #808080; }
.pop-title { display: flex; align-items: center; height: 20px; padding: 0 1px 0 2px; background: linear-gradient(90deg, #0a246a, #a6caf0); border-bottom: 1px solid #d4d0c8; }
.pop-title h2 { color: #fff; }
.pop-body { display: flex; align-items: flex-start; gap: 2px; background: #000; padding: 1px 1px 1px 0; }
.pop-view { flex: 1; border: 3px solid; border-color: #2f6659 #a5ecdc #a5ecdc #2f6659; border-top-width: 2px; border-bottom-width: 2px; }
.pop-view svg { width: 100%; }
.pop-view text { font: 11px "DejaVu Sans Mono", monospace; fill: #b8961e; }
.pop-tools { display: grid; gap: 2px; padding-top: 1px; }
.pop-tools button { width: 33px; height: 33px; background: #9bdbdb; border: 2px solid #6fcdb8; box-shadow: inset 2px 2px #c0fff5, inset -2px -2px #4f8a8a; }
.pop-tools svg { width: 21px; height: 21px; margin: auto; }
.pop-close { background: #000; padding: 0 1px 2px; }
.pop-close button { display: block; width: 100%; height: 27px; font-size: 15px; line-height: 20px; background: #9bdbdb; border: 2px solid #6fcdb8; box-shadow: inset 2px 2px #c0fff5, inset -2px -2px #4f8a8a; }

.tools { width: 160px; flex: none; display: flex; flex-direction: column; overflow: hidden; border-left: 2px solid #2f6659; }
.grid { display: grid; grid-template-columns: repeat(4, 38px); gap: 2px; padding: 2px 0 0 1px; }
.grid button { height: 38px; padding: 1px; background: #9bdbdb; border: 3px solid; border-color: #c6efef #4f8a8a #4f8a8a #c6efef; }
.grid svg { width: 30px; height: 30px; }
.grid .hot { border-color: #d83030 #a81818 #a81818 #d83030; }
.gray button { background: #d2d2d2; border-color: #eee #8c8c8c #8c8c8c #eee; }
.gray .paper { background: #fff; border-color: #ccc #8c8c8c #8c8c8c #ccc; }
.gray .gold { background: #ffc64e; border-color: #ffe08c #a88848 #a88848 #ffe08c; }
.xy { font: bold 6px "Liberation Sans", sans-serif; }
.ratio { font: bold 15px "Liberation Sans", sans-serif; text-anchor: middle; }
.divider { flex: none; height: 4px; border-top: 2px solid #a5dccf; border-bottom: 1px solid #4f7a7a; background: #2f6659; }
.overview { flex: 1; min-height: 0; width: 100%; background: #000; }
.readout { flex: none; height: 45px; padding: 6px 3px; background: #55cdb3; border-top: 2px solid #b0e8dc; border-bottom: 1px solid #b0e8dc; margin-bottom: 1px; font-size: 15px; line-height: 15px; }

.command { display: flex; flex: none; height: 35px; padding: 1px 0 1px 1px; gap: 2px; background: #000; }
.cmd { width: 30px; background: #ffffd0; border: 1px solid #ffffd0; display: flex; align-items: center; justify-content: center; box-shadow: inset 0 0 0 2px #b8b898, inset 0 0 0 3px #ffffe8; }
.cmd svg { width: 22px; height: 22px; flex: none; }
.teal { border: 3px solid #6fc7b4; }
.teal svg { width: 17px; height: 17px; }
.xylabel { width: 46px; padding-left: 2px; background: #ffffd0; font-size: 12px; line-height: 32px; margin-left: -1px; }
.command input { width: 169px; background: #ffffd0; border: 3px solid; border-color: #8c8c74 #d8d8b0 #d8d8b0 #8c8c74; outline: 1px solid #ffffd0; margin: 1px; padding: 0 4px; }
.prompt { flex: 1; padding-left: 3px; background: #ffffd0; font-size: 12px; line-height: 32px; }
.units { width: 75px; display: flex; align-items: center; margin-right: -1px; background: #55cdb3; border: 5px solid #55cdb3; border-width: 3px 1px 1px 6px; box-shadow: inset 2px 2px #b0f5e6, inset -2px -2px #2f7a68; }
.units select { appearance: none; width: 44px; padding-left: 5px; background: none; border: 0; font-size: 15px; line-height: 20px; }
.units i { width: 12px; height: 7px; border: 2px solid; border-color: #b0f5e6 #2f7a68 #2f7a68 #b0f5e6; margin-left: 5px; }

.status { flex: none; height: 31px; margin-left: 1px; border: 2px solid; border-color: #608080 #d0ffff #d0ffff #608080; outline: 1px solid #000; outline-offset: -2px; background: #b5ffff; box-shadow: inset 2px 2px #d8ffff, inset -3px -3px #609898; text-align: center; font-size: 12px; line-height: 26px; }
```
